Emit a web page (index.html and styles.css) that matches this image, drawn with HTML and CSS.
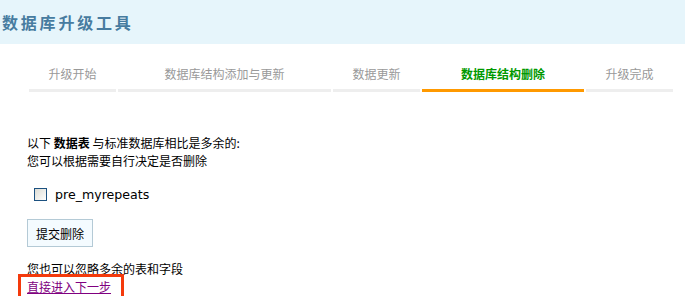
FILE: index.html
```html
<!DOCTYPE html>
<html lang="zh-CN">
<head>
<meta charset="utf-8">
<title>数据库升级工具</title>
<link rel="stylesheet" href="styles.css">
</head>
<body>
<div class="header"><h1 class="title">数据库升级工具</h1></div>
<div class="steps">
  <div class="step w87">升级开始</div>
  <div class="step w213">数据库结构添加与更新</div>
  <div class="step w87">数据更新</div>
  <div class="step w162 active">数据库结构删除</div>
  <div class="step w87">升级完成</div>
</div>
<div class="content">
  <p class="intro">以下 <b>数据表</b> 与标准数据库相比是多余的:<br>您可以根据需要自行决定是否删除</p>
  <label class="row"><input type="checkbox" class="cb"><span class="name">pre_myrepeats</span></label>
  <button class="btn" type="button">提交删除</button>
  <p class="note">您也可以忽略多余的表和字段</p>
  <div class="nextline"><span class="hl"><a class="next" href="#">直接进入下一步</a></span></div>
</div>
</body>
</html>
```
FILE: styles.css
```css
html, body { margin: 0; padding: 0; background: #fff; }
body { font-family: "DejaVu Sans", "Noto Sans CJK SC", sans-serif; font-size: 12px; color: #000; }
.header { height: 44px; background: #e6f5fb; display: flex; align-items: center; padding-left: 2px; }
.title { margin: 0; font-family: "Noto Sans CJK SC", sans-serif; font-size: 16px; font-weight: bold; color: #477ca0; letter-spacing: 2.8px; line-height: 20px; }
.steps { display: flex; gap: 2px; margin: 18px 0 0 29px; }
.step { font-family: "Noto Sans CJK SC", sans-serif; text-align: center; color: #999; line-height: 24px; padding-bottom: 3px; border-bottom: 3px solid #eeeeee; }
.step.active { color: #009900; font-weight: bold; border-bottom-color: #ff9900; }
.w87 { width: 87px; }
.w213 { width: 213px; }
.w162 { width: 162px; }
.content { padding-left: 27px; }
.intro { margin: 42px 0 0; line-height: 18px; font-family: "Noto Sans CJK SC", sans-serif; }
.intro b { font-weight: bold; }
.row { display: flex; align-items: center; height: 18px; margin-top: 15px; padding-left: 7px; }
.cb { appearance: none; -webkit-appearance: none; margin: 0; width: 13px; height: 13px; border: 1px solid #1c5180; background: linear-gradient(135deg, #dcdcd5 0%, #f4f4f1 70%, #ffffff 100%); box-sizing: border-box; }
.name { margin-left: 8px; font-size: 12.6px; color: #000; }
.btn { display: block; margin-top: 16px; width: 66px; height: 28px; padding: 0; border: 1px solid #b4cad6; background: #f4fbff; font-family: "Noto Sans CJK SC", sans-serif; font-size: 12px; color: #000; }
.note { margin: 13px 0 0; line-height: 18px; font-family: "Noto Sans CJK SC", sans-serif; }
.nextline { display: flex; align-items: flex-start; font-family: "Noto Sans CJK SC", sans-serif; }
.hl { display: block; border: 3px solid #f43a0c; padding: 1px 10px 4px 6px; margin: -4px 0 -7px -9px; line-height: 18px; }
.next { color: #800080; text-decoration: underline; }
```
